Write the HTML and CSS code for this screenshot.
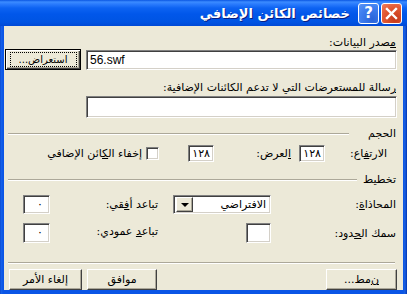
FILE: index.html
```html
<!DOCTYPE html>
<html lang="ar">
<head>
    <meta charset="UTF-8">
    <title>خصائص الكائن الإضافي</title>
    <link rel="stylesheet" href="styles.css">
</head>
<body>

<div class="window">
    <div class="titlebar">
        <span class="title">خصائص الكائن الإضافي</span>
        <span class="tbtn help">?</span>
        <span class="tbtn close">
            <svg width="13" height="13" viewBox="0 0 13 13">
                <path d="M2 2 L11 11 M11 2 L2 11" stroke="#fff" stroke-width="2.4" stroke-linecap="square"/>
            </svg>
        </span>
    </div>

    <div class="body" dir="rtl">
        <div class="lbl first"><u>م</u>صدر البيانات:</div>
        <div class="src-row">
            <div class="field src" dir="ltr">56.swf</div>
            <div class="btn default"><span class="focus">استعراض...</span></div>
        </div>

        <div class="lbl msg"><u>ر</u>سالة للمستعرضات التي لا تدعم الكائنات الإضافية:</div>
        <div class="field msg-box"></div>

        <div class="group-head size-head"><span>الحجم</span><i class="line"></i></div>
        <div class="size-row">
            <span class="cell lbl-h">الارت<u>ف</u>اع:</span>
            <span class="field num">١٢٨</span>
            <span class="cell lbl-w"><u>ا</u>لعرض:</span>
            <span class="field num">١٢٨</span>
            <span class="check"></span>
            <span class="check-lbl">إخفاء ال<u>ك</u>ائن الإضافي</span>
        </div>

        <div class="group-head layout-head"><span>تخطيط</span><i class="line"></i></div>
        <div class="layout-grid">
            <span class="cell">المحاذا<u>ة</u>:</span>
            <div class="field select">
                <span>الافتراضي</span>
                <span class="drop"><i></i></span>
            </div>
            <span class="cell gap-lbl">تباعد أ<u>ف</u>قي:</span>
            <span class="field num small">٠</span>

            <span class="cell">سمك ال<u>ح</u>دود:</span>
            <span class="field num border-w"></span>
            <span class="cell gap-lbl upper">تباع<u>د</u> عمودي:</span>
            <span class="field num small">٠</span>
        </div>

        <div class="sep"></div>

        <div class="buttons">
            <div class="btn style-btn"><u>ن</u>مط...</div>
            <div class="spacer"></div>
            <div class="btn ok">موافق</div>
            <div class="btn cancel">إلغاء الأمر</div>
        </div>
    </div>
</div>

</body>
</html>
```

FILE: styles.css
```css
* {
    padding: 0;
    margin: 0;
    box-sizing: border-box;
}
body {
    width: 407px;
    height: 294px;
    overflow: hidden;
    background: #0a4fdf;
    font-family: "DejaVu Sans", sans-serif;
    font-size: 11px;
    color: #000;
}
u {
    text-decoration: underline;
}
.window {
    width: 407px;
    height: 294px;
    display: flex;
    flex-direction: column;
    background: linear-gradient(to right, #0842c8 0, #1662ea 1px, #0a55e6 3px, #0a55e6 403px, #1a5fe0 405px, #0034b0 407px);
}
.titlebar {
    height: 29px;
    display: flex;
    align-items: center;
    justify-content: flex-end;
    padding-right: 5px;
    background: linear-gradient(to bottom, #0a56e2 0, #3c8cff 2px, #2b7cfd 4px, #0d63f2 8px, #0157ea 14px, #0054e3 22px, #0049d6 26px, #003bb8 29px);
}
.title {
    color: #fff;
    font-weight: bold;
    font-size: 13px;
    text-shadow: 1px 1px 0 #0a1e80;
    margin-right: 6px;
    margin-top: 1px;
}
.tbtn {
    width: 21px;
    height: 21px;
    border: 1px solid #fff;
    border-radius: 3px;
    display: flex;
    align-items: center;
    justify-content: center;
    color: #fff;
    margin-left: 2px;
}
.help {
    background: radial-gradient(circle at 70% 80%, #2a63d8, #3f7ff0 60%, #5b95f5);
    font-family: "DejaVu Sans", sans-serif;
    font-weight: bold;
    font-size: 15px;
}
.close {
    background: radial-gradient(circle at 70% 80%, #c4381a, #e35a34 60%, #ee8060);
}
.body {
    flex: 1;
    margin: 0 4px 4px 4px;
    background: #ece9d8;
    display: flex;
    flex-direction: column;
}
.lbl {
    height: 13px;
    line-height: 13px;
    padding-right: 7px;
}
.lbl.first {
    margin-top: 10px;
}
.field {
    background: #fff;
    border-top: 1px solid #808080;
    border-left: 1px solid #808080;
    border-bottom: 1px solid #fff;
    border-right: 1px solid #fff;
    box-shadow: inset 1px 1px 0 #404040, inset -1px -1px 0 #d4d0c8;
}
.src-row {
    display: flex;
    align-items: center;
    height: 21px;
    padding-right: 6px;
    padding-left: 1px;
    gap: 5px;
}
.src {
    flex: 1;
    height: 20px;
    line-height: 18px;
    padding-left: 3px;
    font-family: "Liberation Sans", sans-serif;
    font-size: 12px;
}
.btn {
    background: #ece9d8;
    border-top: 1px solid #fff;
    border-right: 1px solid #404040;
    border-bottom: 1px solid #404040;
    border-left: 1px solid #fff;
    box-shadow: inset -1px -1px 0 #aca899;
    display: flex;
    align-items: center;
    justify-content: center;
}
.default {
    width: 76px;
    height: 21px;
    border: 1px solid #000;
    box-shadow: inset 1px 1px 0 #fff, inset -1px -1px 0 #404040, inset -2px -2px 0 #aca899;
}
.focus {
    border: 1px dotted #000;
    width: 67px;
    height: 15px;
    line-height: 13px;
    text-align: center;
    font-size: 10px;
}
.lbl.msg {
    margin-top: 11px;
}
.msg-box {
    height: 22px;
    margin: 2px 6px 0 82px;
}
.group-head {
    display: flex;
    align-items: center;
    height: 13px;
    padding-right: 7px;
    padding-left: 4px;
}
.group-head .line {
    flex: 1;
    height: 2px;
    border-top: 1px solid #aca899;
    border-bottom: 1px solid #fff;
}
.size-head {
    margin-top: 9px;
}
.size-head .line {
    margin-right: 19px;
}
.layout-head .line {
    margin-right: 6px;
}
.size-row {
    display: flex;
    align-items: center;
    height: 17px;
    margin-top: 5px;
    padding-right: 16px;
}
.cell {
    line-height: 13px;
}
.lbl-h {
    width: 62px;
}
.lbl-w {
    width: 85px;
    padding-right: 8px;
}
.num {
    width: 26px;
    height: 17px;
    line-height: 15px;
    text-align: right;
    padding-right: 3px;
}
.check {
    width: 13px;
    height: 13px;
    margin-right: 29px;
    background: #fff;
    border: 1px solid #808080;
    border-color: #808080 #fff #fff #808080;
    box-shadow: inset 1px 1px 0 #404040, inset -1px -1px 0 #d4d0c8;
}
.check-lbl {
    margin-right: 4px;
    line-height: 13px;
}
.layout-head {
    margin-top: 11px;
}
.layout-grid {
    display: grid;
    grid-template-columns: 125px 98px 123px 27px;
    grid-template-rows: 19px 20px;
    row-gap: 9px;
    align-items: center;
    margin-top: 9px;
    padding-right: 7px;
}
.select {
    height: 19px;
    display: flex;
    align-items: center;
    justify-content: space-between;
    padding: 0 4px 0 2px;
}
.drop {
    width: 17px;
    height: 15px;
    background: #ece9d8;
    border-top: 1px solid #fff;
    border-left: 1px solid #fff;
    border-right: 1px solid #404040;
    border-bottom: 1px solid #404040;
    box-shadow: inset -1px -1px 0 #aca899;
    display: flex;
    align-items: center;
    justify-content: center;
}
.drop i {
    width: 0;
    height: 0;
    border-left: 4px solid transparent;
    border-right: 4px solid transparent;
    border-top: 4px solid #000;
}
.gap-lbl {
    padding-right: 15px;
}
.upper {
    margin-bottom: 3px;
}
.small {
    width: 27px;
    height: 19px;
    line-height: 17px;
    padding-right: 6px;
}
.layout-grid .small:last-child {
    height: 20px;
}
.border-w {
    width: 25px;
    height: 20px;
}
.sep {
    height: 2px;
    margin: 19px 8px 0 4px;
    border-top: 1px solid #aca899;
    border-bottom: 1px solid #fff;
}
.buttons {
    display: flex;
    height: 21px;
    margin-top: 5px;
    padding-right: 6px;
    padding-left: 5px;
    gap: 5px;
}
.buttons .btn {
    height: 21px;
}
.spacer {
    flex: 1;
}
.style-btn {
    width: 71px;
}
.ok {
    width: 70px;
}
.cancel {
    width: 73px;
}
```
